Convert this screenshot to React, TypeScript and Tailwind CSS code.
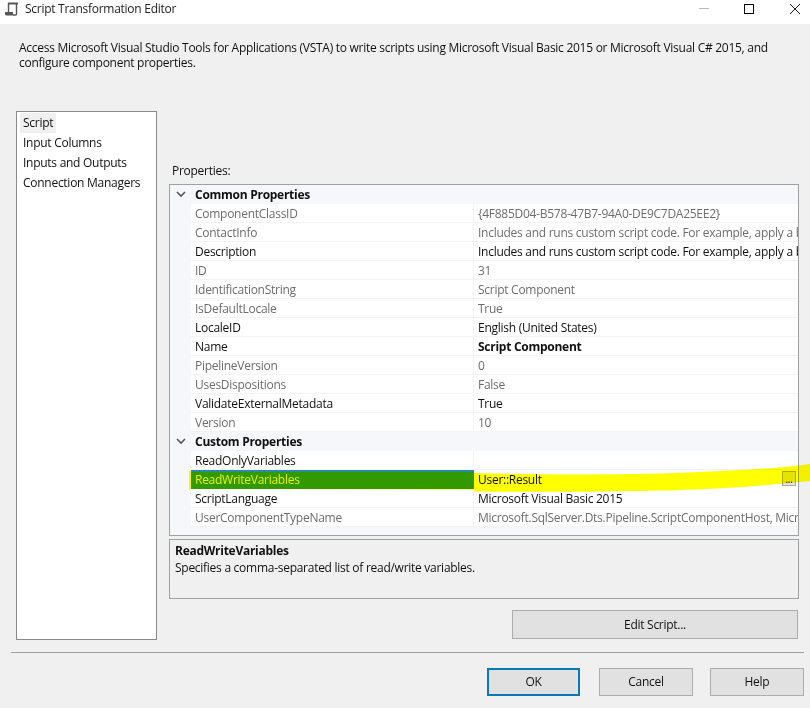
import React from 'react';

type Row = { name: string; value: string; active?: boolean; boldValue?: boolean };

const commonRows: Row[] = [
  { name: 'ComponentClassID', value: '{4F885D04-B578-47B7-94A0-DE9C7DA25EE2}' },
  { name: 'ContactInfo', value: 'Includes and runs custom script code. For example, apply a business rule' },
  { name: 'Description', value: 'Includes and runs custom script code. For example, apply a business rule', active: true },
  { name: 'ID', value: '31' },
  { name: 'IdentificationString', value: 'Script Component' },
  { name: 'IsDefaultLocale', value: 'True' },
  { name: 'LocaleID', value: 'English (United States)', active: true },
  { name: 'Name', value: 'Script Component', active: true, boldValue: true },
  { name: 'PipelineVersion', value: '0' },
  { name: 'UsesDispositions', value: 'False' },
  { name: 'ValidateExternalMetadata', value: 'True', active: true },
  { name: 'Version', value: '10' },
];

const Chevron: React.FC = () => (
  <svg width="10" height="7" viewBox="0 0 10 7" className="ml-[6px]">
    <path d="M1 1 L5 5 L9 1" fill="none" stroke="#555" strokeWidth="1.6" />
  </svg>
);

const GroupRow: React.FC<{ title: string }> = ({ title }) => (
  <div className="flex h-[19px] items-center bg-[#f5f7fa]">
    <div className="w-[21px] shrink-0 flex items-center">
      <Chevron />
    </div>
    <span className="pl-1 font-bold text-[#111]">{title}</span>
  </div>
);

const PropRow: React.FC<{ row: Row }> = ({ row }) => {
  const color = row.active ? 'text-[#111]' : 'text-[#6d6d6d]';
  return (
    <div className="flex h-[19px] bg-[#f5f7fa]">
      <div className="w-[21px] shrink-0" />
      <div className={`w-[283px] shrink-0 bg-white border-b border-r border-[#f3f3f3] pl-1 leading-[20px] whitespace-nowrap ${color}`}>
        {row.name}
      </div>
      <div className={`flex-1 min-w-0 bg-white border-b border-[#f3f3f3] pl-1 leading-[20px] whitespace-nowrap overflow-hidden ${color} ${row.boldValue ? 'font-bold' : ''}`}>
        {row.value}
      </div>
    </div>
  );
};

const DialogButton: React.FC<{ label: string; className: string }> = ({ label, className }) => (
  <button className={`h-[28px] bg-[#e1e1e1] text-[#111] ${className}`}>{label}</button>
);

export default function App() {
  return (
    <div className="relative w-[810px] h-[708px] overflow-hidden bg-[#f0f0f0] text-[12px] text-[#111] font-['Open_Sans','Noto_Sans',sans-serif] tracking-[-0.27px]">
      {/* title bar */}
      <div className="flex h-6 items-center bg-white">
        <svg width="16" height="16" viewBox="0 0 16 16" className="ml-[4px] mr-[5px] -mt-[6px]">
          <path d="M4 2.5 H14" fill="none" stroke="#555" strokeWidth="2" />
          <path d="M4.5 2 V11 M12.5 2 V13" fill="none" stroke="#555" strokeWidth="1.4" />
          <path d="M1 11 H9 V14.5 H2.5 Q1 14.5 1 13 Z" fill="#555" />
          <path d="M9 14 H11.5 Q12.5 14 12.5 13" fill="none" stroke="#555" strokeWidth="1.4" />
        </svg>
        <span className="-mt-[6px] text-[#222]">Script Transformation Editor</span>
        <div className="ml-auto flex items-center">
          <div className="w-[10px] h-px bg-[#bbb] mr-[35px] -mt-[8px]" />
          <div className="w-[10px] h-[10px] border border-black mr-[36px] -mt-[7px]" />
          <svg width="10" height="10" viewBox="0 0 10 10" className="mr-[10px] -mt-[7px]">
            <path d="M0 0 L10 10 M10 0 L0 10" stroke="#111" strokeWidth="1" />
          </svg>
        </div>
      </div>

      {/* intro text */}
      <div className="ml-[19px] mt-[16px] h-[71px] leading-[15px] whitespace-nowrap">
        <div>Access Microsoft Visual Studio Tools for Applications (VSTA) to write scripts using Microsoft Visual Basic 2015 or Microsoft Visual C# 2015, and</div>
        <div>configure component properties.</div>
      </div>

      <div className="flex">
        {/* pages list */}
        <div className="ml-4 w-[141px] h-[529px] shrink-0 border border-[#8a8a8a] bg-white pt-px pl-[3px]">
          <div className="h-5 leading-5 w-fit px-[3px] bg-[#f0f0f0]">Script</div>
          <div className="h-5 leading-5 pl-[3px]">Input Columns</div>
          <div className="h-5 leading-5 pl-[3px]">Inputs and Outputs</div>
          <div className="h-5 leading-5 pl-[3px]">Connection Managers</div>
        </div>

        <div className="ml-3 w-[630px] shrink-0">
          <div className="mt-[52px] h-[21px] leading-4 pl-[3px]">Properties:</div>

          {/* property grid */}
          <div className="h-[352px] border border-[#a0a0a0] bg-[#f5f7fa] overflow-hidden">
            <GroupRow title="Common Properties" />
            {commonRows.map((row) => (
              <PropRow key={row.name} row={row} />
            ))}
            <GroupRow title="Custom Properties" />
            <PropRow row={{ name: 'ReadOnlyVariables', value: '', active: true }} />
            <div className="flex h-[19px] bg-[#f5f7fa]">
              <div className="w-[21px] shrink-0" />
              <div className="w-[283px] shrink-0 bg-[#339900] border-t-2 border-[#2a8aa0] pl-1 leading-[16px] text-[#e6f000] whitespace-nowrap">
                ReadWriteVariables
              </div>
              <div className="relative flex-1 bg-white pl-1 leading-[20px]">
                User::Result
                <div className="absolute right-[2px] top-[1px] flex h-[15px] w-[14px] items-center justify-center border border-[#a8a8a8] bg-[#e4e4e4] text-[10px] leading-[10px]">
                  ...
                </div>
              </div>
            </div>
            <PropRow row={{ name: 'ScriptLanguage', value: 'Microsoft Visual Basic 2015', active: true }} />
            <PropRow row={{ name: 'UserComponentTypeName', value: 'Microsoft.SqlServer.Dts.Pipeline.ScriptComponentHost, Microsoft.SqlServer.TxScript' }} />
          </div>

          {/* description panel */}
          <div className="mt-[3px] h-[60px] border border-[#a0a0a0] pl-[5px] pt-[2px] leading-[18px]">
            <div className="font-bold">ReadWriteVariables</div>
            <div className="-mt-px">Specifies a comma-separated list of read/write variables.</div>
          </div>

          <DialogButton label="Edit Script..." className="mt-[11px] ml-[343px] block w-[286px] h-[29px] border border-[#adadad]" />
        </div>
      </div>

      <div className="mx-[6px] ml-[11px] mt-[12px] border-t border-[#a0a0a0]" />

      <div className="mt-[15px] flex pl-[487px]">
        <DialogButton label="OK" className="w-[93px] border-2 border-[#0a78b4]" />
        <DialogButton label="Cancel" className="ml-[19px] w-[94px] border border-[#adadad]" />
        <DialogButton label="Help" className="ml-[17px] w-[94px] border border-[#adadad]" />
      </div>

      {/* hand drawn highlighter stroke over the selected row */}
      <svg width="810" height="40" viewBox="0 0 810 40" className="absolute left-0 top-[460px] mix-blend-multiply pointer-events-none">
        <path
          d="M189 11 L191 11 L191 13 L474 13 C560 15 640 15 700 12 C750 10 790 7 810 4 L810 21 C770 25 720 30 640 31 C580 32 520 32 474 31.5 L474 29.5 L189 29 Z"
          fill="#ffff00"
        />
      </svg>
    </div>
  );
}
